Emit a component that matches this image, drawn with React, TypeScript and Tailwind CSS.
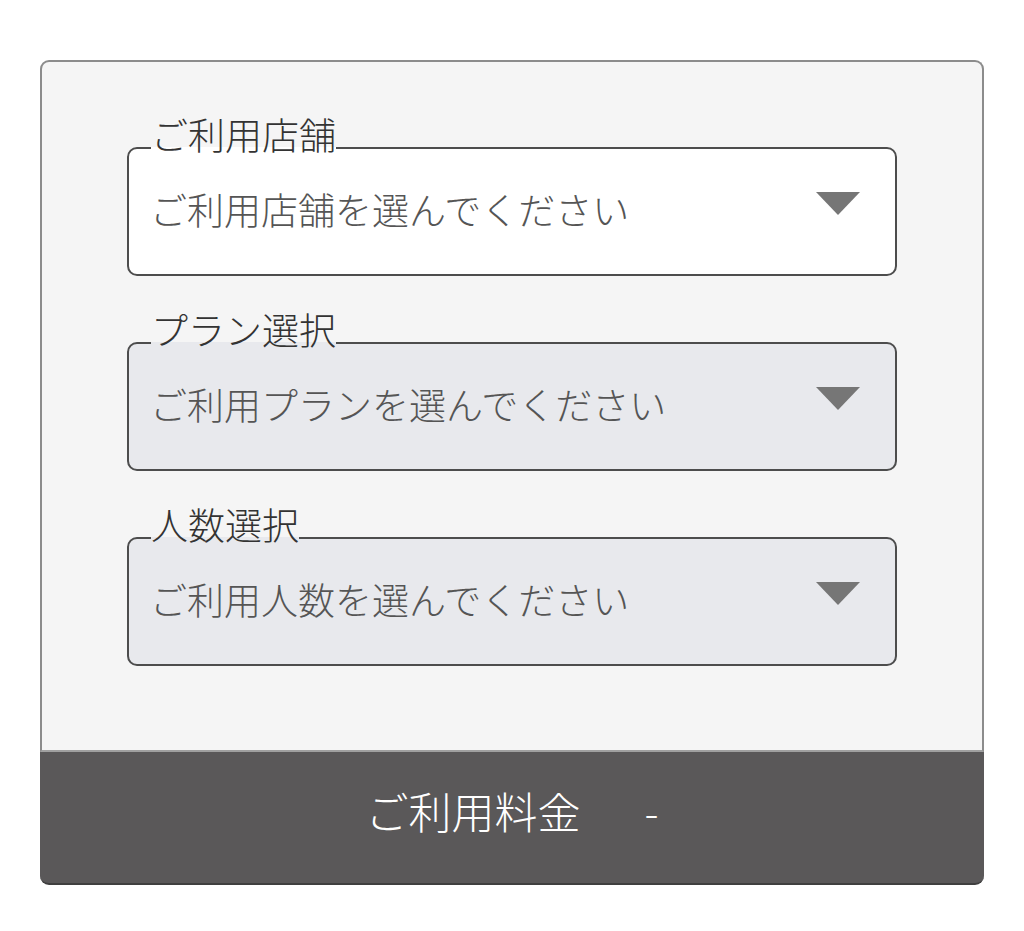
import { useState } from 'react'

type Field = { id: string; label: string; placeholder: string; enabled: boolean }

const fields: Field[] = [
  { id: 'shop', label: 'ご利用店舗', placeholder: 'ご利用店舗を選んでください', enabled: true },
  { id: 'plan', label: 'プラン選択', placeholder: 'ご利用プランを選んでください', enabled: false },
  { id: 'people', label: '人数選択', placeholder: 'ご利用人数を選んでください', enabled: false }
]

const Caret = () => (
  <svg width="44" height="23" viewBox="0 0 44 23" className="shrink-0">
    <path d="M0 0 H44 L22 23 Z" fill="#767676" />
  </svg>
)

const SelectField = ({ field }: { field: Field }) => (
  <fieldset
    className={`box-border w-[770px] rounded-[10px] border-2 border-[#4d4d4d] pl-[21px] pr-[35px] ${
      field.enabled ? 'bg-white' : 'bg-[#e8e9ed]'
    }`}
  >
    <legend className="ml-[1px] pb-[26px] text-[37px] leading-[37px] font-light text-[#333]">{field.label}</legend>
    <div className="flex h-[60px] items-center justify-between">
      <span className="text-[37px] leading-[37px] font-light text-[#555]">{field.placeholder}</span>
      <div className="-mt-[12px]">
        <Caret />
      </div>
    </div>
    <div className="h-[35px]" />
  </fieldset>
)

const App = () => {
  const [price] = useState('-')

  return (
    <div
      className="min-h-[931px] bg-white pt-[60px] pl-[40px]"
      style={{ fontFamily: '"Noto Sans CJK JP", "Noto Sans", sans-serif' }}
    >
      <div className="flex h-[825px] w-[944px] flex-col">
        <div className="box-border flex h-[692px] flex-col items-center gap-[35px] rounded-t-[9px] border-x-2 border-t-2 border-b-2 border-[#8c8c8c] border-b-[#a0a0a0] bg-[#f5f5f5] pt-[54px]">
          {fields.map(f => (
            <SelectField key={f.id} field={f} />
          ))}
        </div>
        <div className="flex flex-1 items-center justify-center gap-[64px] rounded-b-[9px] border-b-2 border-[#3f3f3f] bg-[#5a5859] pb-[14px] text-white">
          <span className="text-[43px] leading-[43px] font-light">ご利用料金</span>
          <span className="text-[42px] leading-[42px] font-light">{price}</span>
        </div>
      </div>
    </div>
  )
}

export default App
